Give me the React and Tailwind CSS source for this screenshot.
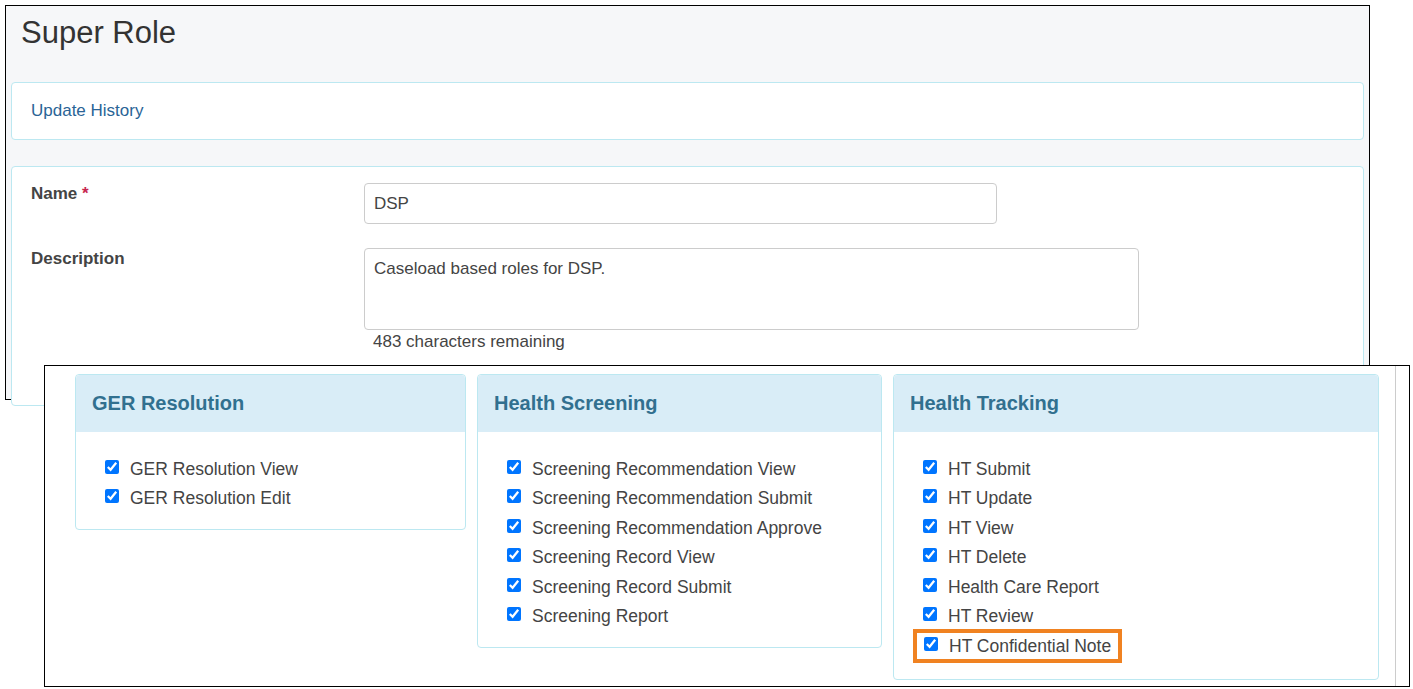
import React from "react";

const groups = [
  {
    title: "GER Resolution",
    width: "w-[391px]",
    items: ["GER Resolution View", "GER Resolution Edit"],
  },
  {
    title: "Health Screening",
    width: "w-[405px]",
    items: [
      "Screening Recommendation View",
      "Screening Recommendation Submit",
      "Screening Recommendation Approve",
      "Screening Record View",
      "Screening Record Submit",
      "Screening Report",
    ],
  },
  {
    title: "Health Tracking",
    width: "w-[486px]",
    items: [
      "HT Submit",
      "HT Update",
      "HT View",
      "HT Delete",
      "Health Care Report",
      "HT Review",
      "HT Confidential Note",
    ],
    highlight: "HT Confidential Note",
  },
];

const Check = () => (
  <input
    type="checkbox"
    defaultChecked
    className="w-[14px] h-[14px] accent-[#0075ff] m-0 -mt-[4px]"
  />
);

const App = () => {
  return (
    <div
      className="relative w-[1413px] h-[689px] bg-white overflow-hidden text-[#444]"
      style={{ fontFamily: '"Liberation Sans", Arial, sans-serif' }}
    >
      {/* back window */}
      <div className="absolute left-[5px] top-[5px] w-[1365px] h-[395px] border border-black bg-[#f6f7f9] px-[5px]">
        <h1 className="text-[31px] font-normal text-[#333] pl-[10px] pt-[4px] h-[76px]">
          Super Role
        </h1>
        <div className="bg-white border border-[#bce8f1] rounded h-[58px] flex items-center px-[19px]">
          <span className="text-[#2a6496] text-[17px]">Update History</span>
        </div>
        <div className="mt-[26px] bg-white border border-[#bce8f1] rounded h-[240px] px-[19px] pt-[14px]">
          <div className="flex">
            <label className="w-[333px] font-bold text-[17px]">
              Name <span className="text-[#c7254e]">*</span>
            </label>
            <div className="w-[633px] h-[41px] border border-[#ccc] rounded px-[9px] flex items-center text-[17px] mt-[2px]">
              DSP
            </div>
          </div>
          <div className="flex mt-[24px]">
            <label className="w-[333px] font-bold text-[17px] -mt-[2px]">
              Description
            </label>
            <div>
              <div className="w-[775px] h-[82px] border border-[#ccc] rounded px-[9px] pt-[7px] text-[17px]">
                Caseload based roles for DSP.
              </div>
              <div className="text-[17px] pl-[9px] mt-[-1px]">
                483 characters remaining
              </div>
            </div>
          </div>
        </div>
      </div>

      {/* front window */}
      <div className="absolute left-[44px] top-[365px] w-[1366px] h-[322px] border border-black bg-white pl-[30px] pt-[8px]">
        <div className="absolute right-[13px] top-0 bottom-0 w-px bg-[#ccc]" />
        <div className="flex items-start gap-[11px]">
          {groups.map((g) => (
            <div
              key={g.title}
              className={`${g.width} border border-[#bce8f1] rounded bg-white pb-[16px]`}
            >
              <div className="bg-[#d9edf7] h-[57px] flex items-center px-[16px] rounded-t">
                <h2 className="text-[20px] font-bold text-[#31708f] -mt-[2px]">
                  {g.title}
                </h2>
              </div>
              <ul className="pt-[22px] pl-[29px] flex flex-col">
                {g.items.map((item) =>
                  item === g.highlight ? (
                    <li
                      key={item}
                      className="h-[34px] w-fit -ml-[10px] -mt-[2px] px-[7px] border-[4px] border-[#f08221] flex items-center gap-[11px] text-[17.5px]"
                    >
                      <Check />
                      {item}
                    </li>
                  ) : (
                    <li
                      key={item}
                      className="h-[29.5px] flex items-center gap-[11px] text-[17.5px]"
                    >
                      <Check />
                      {item}
                    </li>
                  )
                )}
              </ul>
            </div>
          ))}
        </div>
      </div>
    </div>
  );
};

export default App;
